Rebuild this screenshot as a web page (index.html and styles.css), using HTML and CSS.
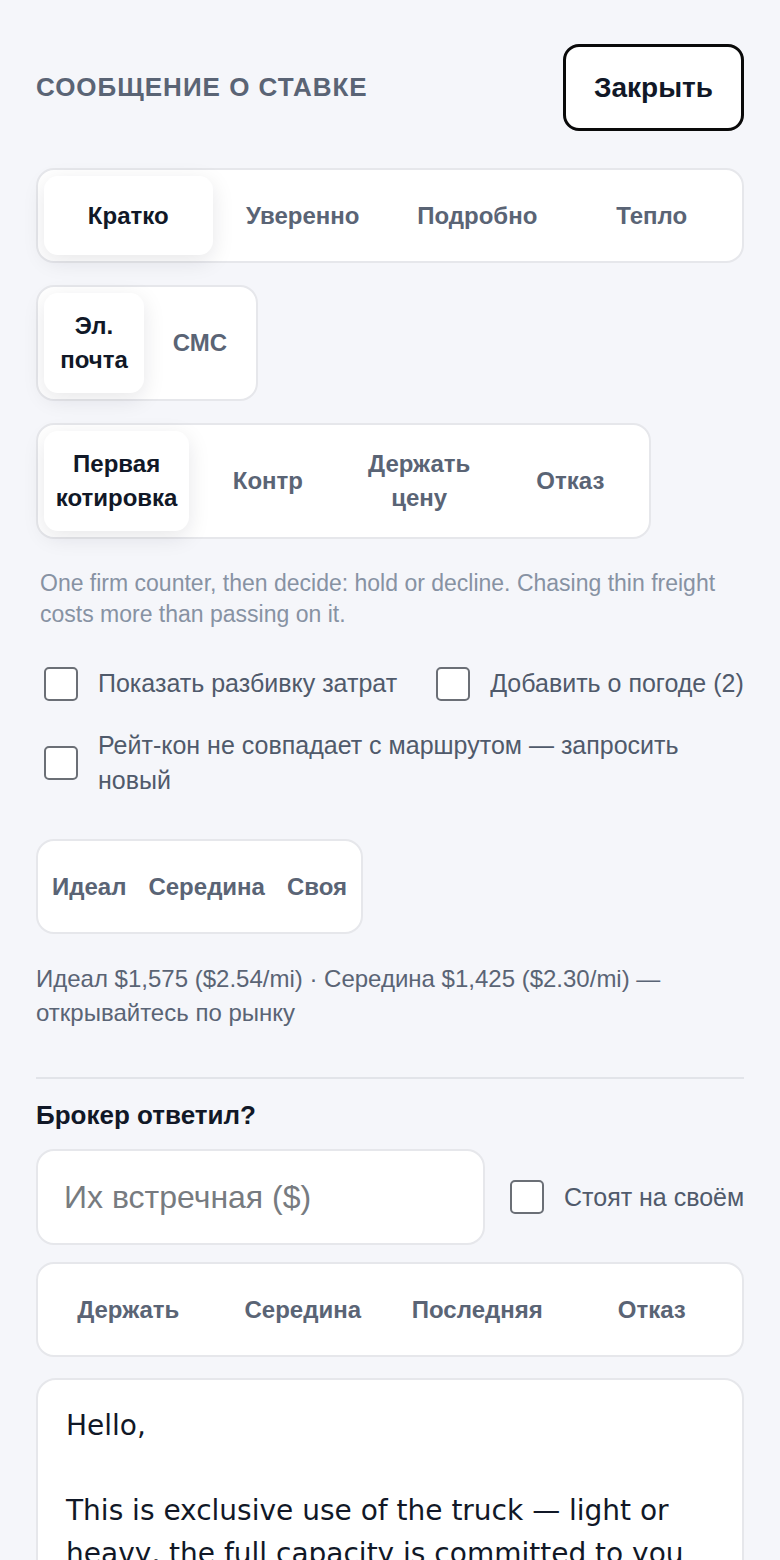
FILE: index.html
```html
<!DOCTYPE html>
<html lang="ru">
<head>
<meta charset="utf-8">
<title>Сообщение о ставке</title>
<link rel="stylesheet" href="styles.css">
</head>
<body>
<main class="page">
  <header class="header">
    <h1 class="title">Сообщение о ставке</h1>
    <button class="close-btn" type="button">Закрыть</button>
  </header>

  <div class="seg seg-full seg-tone">
    <div class="seg-item active">Кратко</div>
    <div class="seg-item">Уверенно</div>
    <div class="seg-item">Подробно</div>
    <div class="seg-item">Тепло</div>
  </div>

  <div class="seg seg-channel">
    <div class="seg-item active">Эл. почта</div>
    <div class="seg-item">СМС</div>
  </div>

  <div class="seg seg-stage">
    <div class="seg-item active">Первая котировка</div>
    <div class="seg-item">Контр</div>
    <div class="seg-item">Держать цену</div>
    <div class="seg-item">Отказ</div>
  </div>

  <p class="hint">One firm counter, then decide: hold or decline. Chasing thin freight costs more than passing on it.</p>

  <div class="checks">
    <label class="check"><span class="box"></span><span class="check-label">Показать разбивку затрат</span></label>
    <label class="check"><span class="box"></span><span class="check-label">Добавить о погоде (2)</span></label>
    <label class="check check-wide"><span class="box"></span><span class="check-label">Рейт-кон не совпадает с маршрутом — запросить новый</span></label>
  </div>

  <div class="seg seg-price">
    <div class="seg-item">Идеал</div>
    <div class="seg-item">Середина</div>
    <div class="seg-item">Своя</div>
  </div>

  <p class="price-note">Идеал $1,575 ($2.54/mi) · Середина $1,425 ($2.30/mi) — открывайтесь по рынку</p>

  <hr class="divider">

  <h2 class="subhead">Брокер ответил?</h2>

  <div class="reply-row">
    <input class="counter-input" type="text" placeholder="Их встречная ($)">
    <label class="check check-inline"><span class="box"></span><span class="check-label">Стоят на своём</span></label>
  </div>

  <div class="seg seg-full">
    <div class="seg-item">Держать</div>
    <div class="seg-item">Середина</div>
    <div class="seg-item">Последняя</div>
    <div class="seg-item">Отказ</div>
  </div>

  <textarea class="message">Hello,

This is exclusive use of the truck — light or heavy, the full capacity is committed to you for the whole run. Our rate reflects the lane, the deadhead and the time on the road.

Let me know if this works for you.</textarea>
</main>
</body>
</html>
```

FILE: styles.css
```css
* { box-sizing: border-box; }

html, body {
  margin: 0;
  padding: 0;
  background: #f5f6fa;
}

body {
  font-family: "Liberation Sans", Arial, sans-serif;
  color: #111827;
}

.page {
  padding: 44px 36px 40px;
}

.header {
  display: flex;
  justify-content: space-between;
  align-items: center;
}

.title {
  margin: 0;
  font-size: 26px;
  font-weight: 700;
  text-transform: uppercase;
  letter-spacing: 1px;
  color: #5a6475;
}

.close-btn {
  height: 87px;
  padding: 0 28px;
  border: 3px solid #0a0a0a;
  border-radius: 16px;
  background: #fff;
  font-family: inherit;
  font-size: 28px;
  font-weight: 700;
  color: #111827;
}

.seg {
  display: flex;
  gap: 6px;
  padding: 6px;
  border: 2px solid #e6e7eb;
  border-radius: 18px;
  background: #fff;
  margin-top: 22px;
}

.seg-tone { margin-top: 37px; }

.seg-item {
  flex: 1 1 0;
  min-height: 79px;
  padding: 16px 8px;
  display: flex;
  align-items: center;
  justify-content: center;
  text-align: center;
  font-size: 24px;
  line-height: 34px;
  font-weight: 700;
  color: #5a6475;
  border-radius: 14px;
}

.seg-item.active {
  color: #111827;
  background: #fff;
  box-shadow: 0 6px 22px rgba(15, 23, 42, 0.10);
}

.seg-channel {
  display: grid;
  width: fit-content;
  grid-template-columns: 100px 100px;
}

.seg-stage {
  display: grid;
  width: 615px;
  grid-template-columns: repeat(4, 1fr);
}

.seg-price {
  width: fit-content;
  margin-top: 41px;
}

.seg-price .seg-item {
  flex: 0 0 auto;
  padding: 0 8px;
}

.hint {
  margin: 29px 0 0;
  padding: 0 4px;
  font-size: 23px;
  line-height: 31px;
  color: #8792a3;
}

.checks {
  display: flex;
  flex-wrap: wrap;
  column-gap: 31px;
  row-gap: 27px;
  margin-top: 36px;
}

.check {
  display: flex;
  align-items: center;
  gap: 20px;
  padding-left: 8px;
}

.check-wide { width: 100%; }

.box {
  flex: 0 0 auto;
  width: 34px;
  height: 34px;
  border: 2px solid #6b6f76;
  border-radius: 5px;
  background: #fff;
}

.check-label {
  font-size: 25px;
  line-height: 35px;
  color: #505a6b;
}

.price-note {
  margin: 28px 0 0;
  font-size: 24px;
  line-height: 34px;
  color: #5a6475;
}

.divider {
  margin: 47px 0 0;
  border: 0;
  height: 2px;
  background: #e2e4e9;
}

.subhead {
  margin: 19px 0 0;
  font-size: 26px;
  line-height: 34px;
  font-weight: 700;
  color: #111827;
}

.reply-row {
  display: flex;
  align-items: center;
  gap: 17px;
  margin-top: 17px;
}

.check-inline {
  flex: 0 0 auto;
  padding-left: 0;
  margin-left: 8px;
  white-space: nowrap;
}

.counter-input {
  flex: 0 0 auto;
  width: 449px;
  height: 96px;
  padding: 0 26px;
  border: 2px solid #e6e7eb;
  border-radius: 18px;
  background: #fff;
  font-family: "Liberation Sans", Arial, sans-serif;
  font-size: 32px;
  color: #111827;
  outline: none;
}

.counter-input::placeholder { color: #777b80; }

.reply-row + .seg { margin-top: 17px; }

.message {
  display: block;
  width: 100%;
  height: 420px;
  margin-top: 21px;
  padding: 25px 28px;
  border: 2px solid #e6e7eb;
  border-radius: 20px;
  background: #fff;
  font-family: "DejaVu Sans", sans-serif;
  font-size: 28px;
  line-height: 42.5px;
  color: #111827;
  resize: none;
  outline: none;
}
```
